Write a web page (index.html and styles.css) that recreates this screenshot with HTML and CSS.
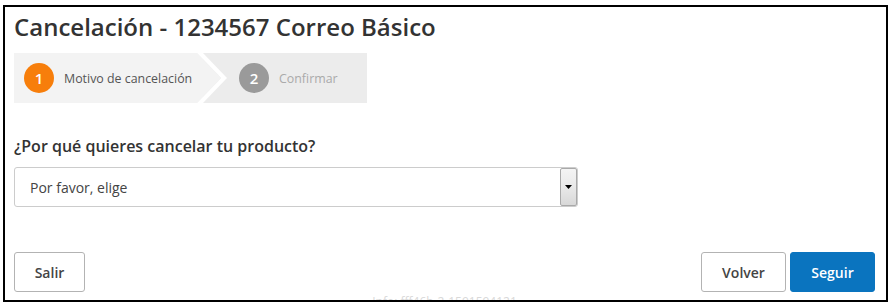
FILE: index.html
```html
<!DOCTYPE html>
<html lang="es">
<head>
<meta charset="utf-8">
<title>Cancelación</title>
<link rel="stylesheet" href="styles.css">
</head>
<body>
<div class="frame">
  <h1 class="title">Cancelación - 1234567 Correo Básico</h1>
  <div class="stepper">
    <div class="step step-active">
      <span class="num num-active">1</span>
      <span class="label">Motivo de cancelación</span>
      <svg class="chev" width="30" height="50" viewBox="0 0 30 50"><polygon points="0,0 6,0 30,25 6,50 0,50 24,25" fill="#ffffff"/><polygon points="0,0 24,25 0,50" fill="#f3f3f3"/></svg>
    </div>
    <div class="step step-next">
      <span class="num num-next">2</span>
      <span class="label label-next">Confirmar</span>
    </div>
  </div>
  <label class="question">¿Por qué quieres cancelar tu producto?</label>
  <div class="select">
    <span class="select-text">Por favor, elige</span>
    <span class="select-btn"><svg width="7" height="4" viewBox="0 0 7 4"><polygon points="0,0 7,0 3.5,4" fill="#000"/></svg></span>
  </div>
  <div class="actions">
    <button class="btn">Salir</button>
    <div class="actions-right">
      <button class="btn btn-back">Volver</button>
      <button class="btn btn-primary">Seguir</button>
    </div>
  </div>
  <div class="info">Info: fff46b-2-1591594121</div>
</div>
</body>
</html>
```

FILE: styles.css
```css
html, body {
  margin: 0;
  padding: 0;
  background: #ffffff;
}
body {
  font-family: "Open Sans", "Liberation Sans", sans-serif;
  color: #333333;
}
.frame {
  box-sizing: border-box;
  margin: 5px 0 0 3px;
  width: 885px;
  height: 297px;
  border: 2px solid #000000;
  padding: 0 11px 0 9px;
  overflow: hidden;
  display: flex;
  flex-direction: column;
}
.title {
  margin: 3px 0 0 0;
  font-size: 24px;
  line-height: 33px;
  font-weight: 600;
  color: #333333;
}
.stepper {
  margin-top: 10px;
  display: flex;
  width: 353px;
  height: 50px;
}
.step {
  display: flex;
  align-items: center;
  height: 50px;
  position: relative;
}
.step-active {
  background: #f3f3f3;
  width: 189px;
  padding-left: 10px;
  box-sizing: border-box;
}
.chev {
  position: absolute;
  right: -24px;
  top: 0;
  z-index: 1;
}
.step-next {
  background: #ececec;
  flex: 1;
  padding-left: 36px;
}
.num {
  width: 30px;
  height: 30px;
  border-radius: 50%;
  display: flex;
  align-items: center;
  justify-content: center;
  color: #ffffff;
  font-size: 15px;
  font-weight: 600;
  flex: none;
}
.num-active {
  background: #f77e0b;
}
.num-next {
  background: #9a9a9a;
  position: relative;
  z-index: 2;
}
.label {
  margin-left: 10px;
  font-size: 12.4px;
  color: #555555;
  white-space: nowrap;
}
.label-next {
  color: #aaaaaa;
}
.question {
  margin-top: 32px;
  font-size: 16px;
  line-height: 22px;
  font-weight: 600;
  color: #333333;
}
.select {
  margin-top: 10px;
  box-sizing: border-box;
  width: 564px;
  height: 40px;
  border: 1px solid #cccccc;
  border-radius: 3px;
  display: flex;
  align-items: center;
  justify-content: space-between;
  padding-left: 15px;
}
.select-text {
  font-size: 14px;
  color: #444444;
}
.select-btn {
  box-sizing: border-box;
  width: 17px;
  height: 38px;
  border: 1px solid #a9a9a9;
  border-radius: 2px;
  background: linear-gradient(#f4f4f4, #e9e9e9 50%, #d8d8d8);
  display: flex;
  align-items: center;
  justify-content: center;
}
.actions {
  margin-top: 45px;
  display: flex;
  justify-content: space-between;
}
.actions-right {
  display: flex;
  gap: 4px;
}
.btn {
  box-sizing: border-box;
  height: 40px;
  border: 1px solid #b3b3b3;
  border-radius: 3px;
  background: #ffffff;
  font-family: "Open Sans", "Liberation Sans", sans-serif;
  font-size: 14px;
  font-weight: 600;
  color: #444444;
  width: 71px;
  padding: 0;
}
.btn-back {
  width: 85px;
}
.btn-primary {
  width: 85px;
  background: #0a74bf;
  border-color: #0a74bf;
  color: #ffffff;
}
.info {
  margin-top: 2px;
  text-align: center;
  font-size: 12px;
  line-height: 16px;
  color: #d9d9d9;
}
```
